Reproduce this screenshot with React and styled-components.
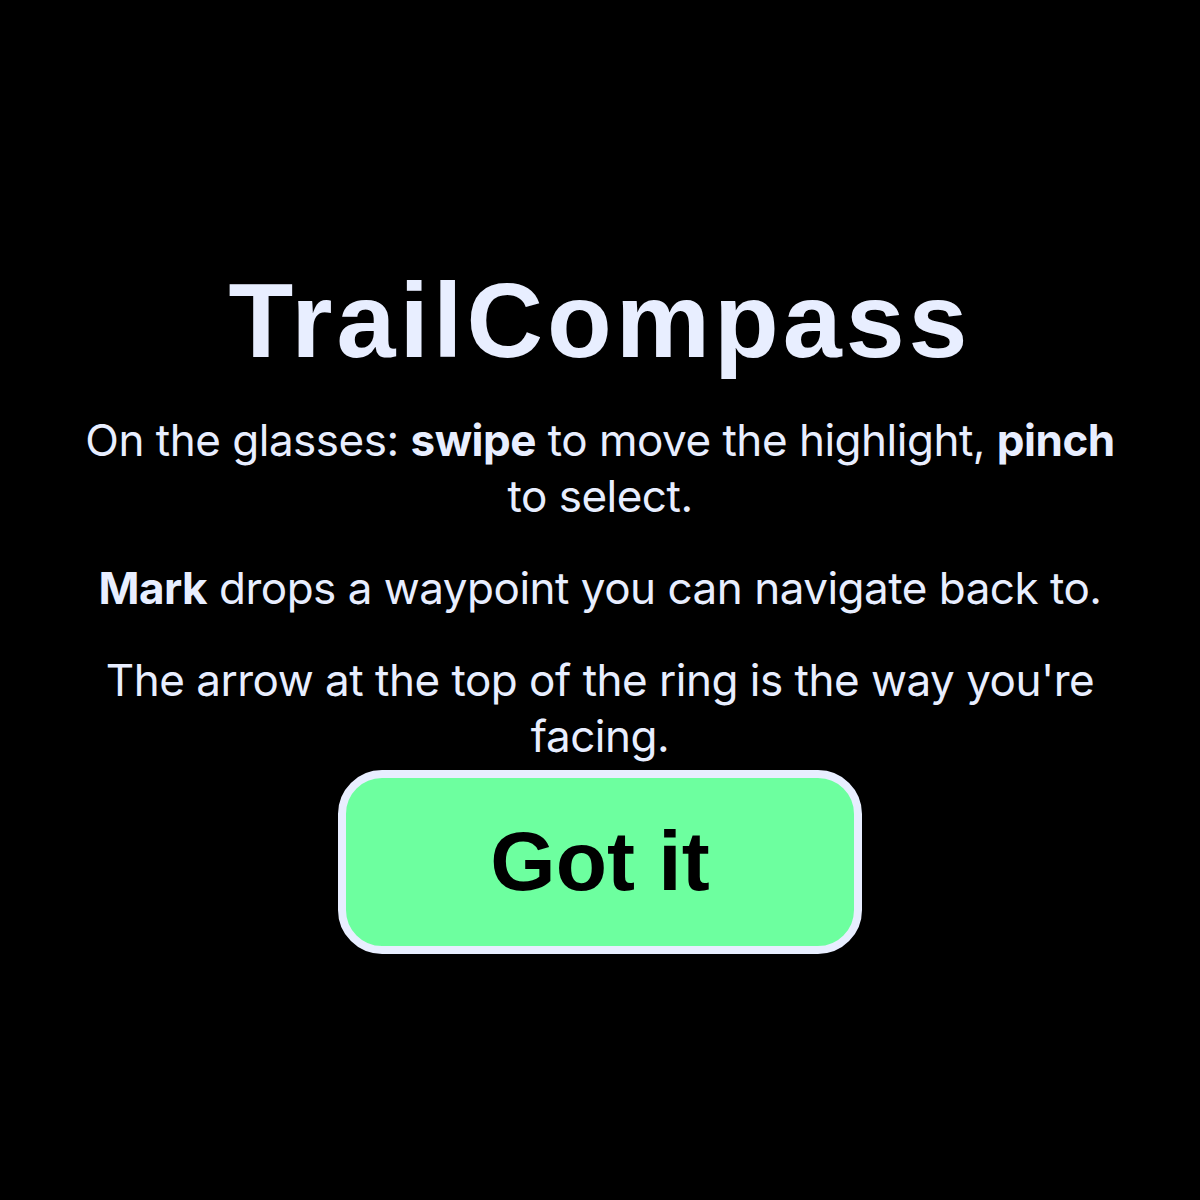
import styled, { createGlobalStyle } from "styled-components";

const GlobalStyle = createGlobalStyle`
  html, body {
    margin: 0;
    padding: 0;
    background: #000000;
  }
`;

const Screen = styled.main`
  min-height: 1200px;
  display: flex;
  flex-direction: column;
  align-items: center;
  justify-content: center;
  background: #000000;
  color: #e8eeff;
  text-align: center;
  padding: 14px 60px 0;
  box-sizing: border-box;
`;

const Title = styled.h1`
  margin: 0 0 30px 0;
  font-family: "Liberation Sans", Arial, sans-serif;
  font-weight: 700;
  font-size: 106px;
  line-height: 1.15;
  letter-spacing: 4px;
`;

const Hint = styled.p`
  margin: 0 0 ${(props) => (props.$last ? "6px" : "36px")} 0;
  font-family: Inter, "Noto Sans", sans-serif;
  font-size: 44px;
  line-height: 56px;
  letter-spacing: -0.5px;

  b {
    font-weight: 700;
  }
`;

const GotItButton = styled.button`
  width: 524px;
  height: 184px;
  box-sizing: border-box;
  border: 8px solid #e8eeff;
  border-radius: 44px;
  background: #6dff9f;
  color: #000000;
  font-family: "Liberation Sans", Arial, sans-serif;
  font-weight: 700;
  font-size: 84px;
  cursor: pointer;
`;

export default function App() {
  return (
    <>
      <GlobalStyle />
      <Screen>
        <Title>TrailCompass</Title>
        <Hint>
          On the glasses: <b>swipe</b> to move the highlight, <b>pinch</b> to
          select.
        </Hint>
        <Hint>
          <b>Mark</b> drops a waypoint you can navigate back to.
        </Hint>
        <Hint $last>
          The arrow at the top of the ring is the way you're facing.
        </Hint>
        <GotItButton>Got it</GotItButton>
      </Screen>
    </>
  );
}
